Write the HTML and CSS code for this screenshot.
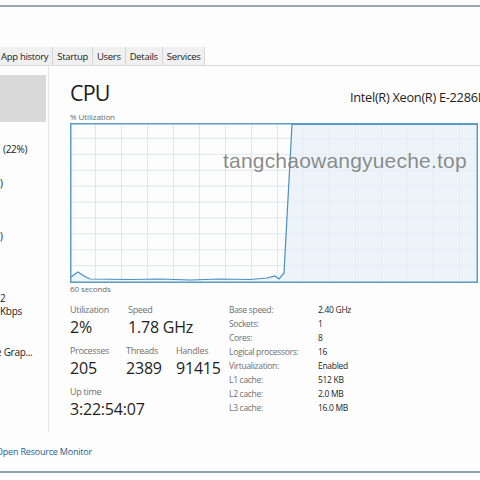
FILE: index.html
```html
<!DOCTYPE html>
<html lang="en">
<head>
  <meta charset="UTF-8" />
  <title>Task Manager - CPU</title>
  <link rel="stylesheet" href="styles.css">
</head>
<body>
  <div class="topbar"></div>
  <div class="menubar"></div>
  <div class="tabs">
    <span class="tab">App history</span>
    <span class="tab">Startup</span>
    <span class="tab">Users</span>
    <span class="tab">Details</span>
    <span class="tab">Services</span>
  </div>
  <div class="content">
    <div class="sidebar">
      <div class="side-item selected"><span class="cut">t</span></div>
      <div class="side-text s-mem">(22%)</div>
      <div class="side-text s-disk0">)</div>
      <div class="side-text s-disk1">)</div>
      <div class="side-text s-eth">2</div>
      <div class="side-text s-kbps">Kbps</div>
      <div class="side-text s-gpu"><span class="cut">e</span> Grap...</div>
    </div>
    <div class="main">
      <div class="header">
        <h1>CPU</h1>
        <span class="model">Intel(R) Xeon(R) E-2286M CPU @ 2.40GHz</span>
      </div>
      <div class="small-label">% Utilization</div>
      <svg class="graph" width="408" height="160" viewBox="0 0 408 160">
        <defs>
          <pattern id="grid" x="25" y="0" width="26" height="15.9" patternUnits="userSpaceOnUse">
            <path d="M0.5 0V15.9M0 15.4H26" stroke="#dde7ef" stroke-width="1" fill="none"/>
          </pattern>
        </defs>
        <rect width="408" height="160" fill="url(#grid)"/>
        <path d="M1 154 L8 149 L14 153 L20 156 L60 156.5 L90 156 L120 157 L150 156 L180 156.5 L197 155 L205 153 L209 156 L214 150 L222 1.5 L407 1.5 V159 H1 Z" fill="#e6eff7" fill-opacity="0.7"/>
        <path d="M1 154 L8 149 L14 153 L20 156 L60 156.5 L90 156 L120 157 L150 156 L180 156.5 L197 155 L205 153 L209 156 L214 150 L222 1.5 L407 1.5" fill="none" stroke="#4b8fbd" stroke-width="1.2"/>
        <rect x="0.75" y="0.75" width="406.5" height="158.5" fill="none" stroke="#5f9cc5" stroke-width="1.5"/>
      </svg>
      <div class="small-label">60 seconds</div>
      <div class="stats">
        <div class="live">
          <div class="row">
            <div class="stat w56"><div class="label">Utilization</div><div class="value">2%</div></div>
            <div class="stat speed"><div class="label">Speed</div><div class="value">1.78 GHz</div></div>
          </div>
          <div class="row">
            <div class="stat w56"><div class="label">Processes</div><div class="value">205</div></div>
            <div class="stat w50"><div class="label">Threads</div><div class="value">2389</div></div>
            <div class="stat"><div class="label">Handles</div><div class="value">91415</div></div>
          </div>
          <div class="row">
            <div class="stat"><div class="label">Up time</div><div class="value">3:22:54:07</div></div>
          </div>
        </div>
        <div class="specs">
          <span class="key">Base speed:</span><span>2.40 GHz</span>
          <span class="key">Sockets:</span><span>1</span>
          <span class="key">Cores:</span><span>8</span>
          <span class="key">Logical processors:</span><span>16</span>
          <span class="key">Virtualization:</span><span>Enabled</span>
          <span class="key">L1 cache:</span><span>512 KB</span>
          <span class="key">L2 cache:</span><span>2.0 MB</span>
          <span class="key">L3 cache:</span><span>16.0 MB</span>
        </div>
      </div>
    </div>
  </div>
  <div class="footer"><a href="#"><span class="cut">O</span>pen Resource Monitor</a></div>
  <div class="bottomline"></div>
  <div class="watermark">tangchaowangyueche.top</div>
</body>
</html>
```

FILE: styles.css
```css
html, body {
  margin: 0;
  padding: 0;
}
body {
  width: 480px;
  height: 480px;
  overflow: hidden;
  position: relative;
  background-color: #fdfdfd;
  color: #1e1e1e;
  font-family: 'Open Sans', 'Noto Sans', sans-serif;
}
.topbar {
  height: 5px;
  border-bottom: 2px solid #97a7b2;
}
.menubar {
  height: 40px;
}
.tabs {
  display: flex;
  height: 18px;
  border-bottom: 1px solid #dcdcdc;
}
.tab {
  display: flex;
  align-items: center;
  padding: 0 4px;
  background-color: #f0f0f0;
  border-right: 1px solid #d6d6d6;
  font-size: 9.5px;
  letter-spacing: -0.3px;
  color: #1b1b1b;
}
.tab:first-child {
  padding-left: 1px;
}
.content {
  display: flex;
  height: 366px;
}
.sidebar {
  width: 48px;
  flex: none;
  overflow: hidden;
  border-right: 1px solid #e6e6e6;
  font-size: 10px;
  letter-spacing: -0.3px;
}
.side-item {
  margin-top: 9px;
  height: 47px;
  background-color: #d9d9d9;
  width: 46px;
  line-height: 47px;
  font-size: 10px;
}
.cut {
  display: inline-block;
  margin-left: -4px;
}
.side-text {
  line-height: 14px;
  white-space: nowrap;
  color: #222;
}
.s-mem { margin-top: 20px; padding-left: 3px; }
.s-disk0 { margin-top: 20px; }
.s-disk1 { margin-top: 39px; }
.s-eth { margin-top: 48px; }
.s-kbps { margin-top: -1px; }
.s-gpu { margin-top: 27px; }
.main {
  flex: 1;
  padding: 14px 0 0 21px;
  min-width: 0;
}
.header {
  display: flex;
  align-items: baseline;
  white-space: nowrap;
  height: 26px;
}
h1 {
  margin: 0;
  font-size: 21.5px;
  font-weight: 400;
  line-height: 26px;
  letter-spacing: -0.9px;
  width: 280px;
  flex: none;
}
.model {
  font-size: 12.8px;
  letter-spacing: -0.3px;
  position: relative;
  top: 1px;
}
.small-label {
  font-size: 8px;
  line-height: 12px;
  color: #6a6a6a;
  letter-spacing: -0.1px;
}
.header + .small-label {
  margin-top: 5px;
}
.graph {
  display: block;
}
.stats {
  display: flex;
  margin-top: 9px;
}
.live {
  width: 159px;
  flex: none;
}
.row {
  display: flex;
  margin-bottom: 7px;
}
.stat {
  white-space: nowrap;
}
.w56 { width: 56px; }
.w50 { width: 50px; }
.speed { margin-left: 2px; }
.label {
  font-size: 9px;
  line-height: 12px;
  color: #707070;
  letter-spacing: -0.3px;
}
.value {
  font-size: 16px;
  line-height: 22px;
  letter-spacing: -0.2px;
}
.specs {
  display: grid;
  grid-template-columns: 89px auto;
  grid-auto-rows: 14px;
  align-content: start;
  margin-top: -1px;
  font-size: 8.5px;
  line-height: 14px;
  letter-spacing: -0.3px;
  white-space: nowrap;
}
.specs .key {
  color: #707070;
}
.footer {
  height: 39px;
  padding-top: 13px;
  box-sizing: border-box;
  font-size: 9px;
  line-height: 14px;
  letter-spacing: -0.2px;
}
.footer a {
  color: #2a5d8c;
  text-decoration: none;
}
.bottomline {
  border-top: 2px solid #8ea0ad;
}
.watermark {
  position: absolute;
  left: 223px;
  top: 149px;
  font-family: 'Liberation Sans', Arial, sans-serif;
  font-size: 21px;
  color: rgba(110, 110, 110, 0.8);
  letter-spacing: 0.2px;
}
```
